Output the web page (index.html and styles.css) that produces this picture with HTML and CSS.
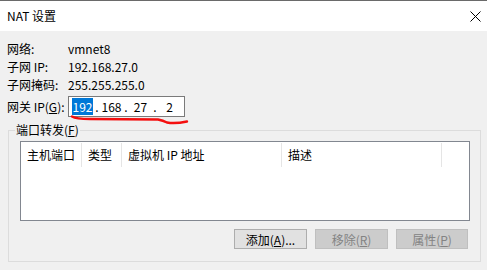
FILE: index.html
```html
<!DOCTYPE html>
<html lang="zh-CN">
<head>
    <meta charset="UTF-8">
    <title>NAT 设置</title>
    <link rel="stylesheet" href="styles.css">
</head>
<body>
    <div class="dialog">
        <div class="titlebar">
            <span class="title">NAT 设置</span>
            <svg class="close" width="11" height="11" viewBox="0 0 11 11">
                <path d="M0.5 0.5 L10.5 10.5 M10.5 0.5 L0.5 10.5" stroke="#000" stroke-width="1" fill="none"/>
            </svg>
        </div>

        <div class="content">
            <div class="row">
                <span class="label">网络:</span>
                <span class="value">vmnet8</span>
            </div>
            <div class="row">
                <span class="label">子网 IP:</span>
                <span class="value">192.168.27.0</span>
            </div>
            <div class="row">
                <span class="label">子网掩码:</span>
                <span class="value">255.255.255.0</span>
            </div>
            <div class="row gateway">
                <span class="label">网关 IP(<u>G</u>):</span>
                <div class="ip-box">
                    <span class="ip-field"><span class="selected">192</span></span>
                    <span class="ip-dot">.</span>
                    <span class="ip-field">168</span>
                    <span class="ip-dot">.</span>
                    <span class="ip-field">27</span>
                    <span class="ip-dot">.</span>
                    <span class="ip-field">2</span>
                </div>
            </div>

            <div class="group">
                <div class="group-title">端口转发(<u>F</u>)</div>
                <div class="list">
                    <div class="list-header">
                        <span class="col col-port">主机端口</span>
                        <span class="col col-type">类型</span>
                        <span class="col col-ip">虚拟机 IP 地址</span>
                        <span class="col col-desc">描述</span>
                    </div>
                </div>
                <div class="buttons">
                    <button class="btn">添加(<u>A</u>)...</button>
                    <button class="btn" disabled>移除(<u>R</u>)</button>
                    <button class="btn narrow" disabled>属性(<u>P</u>)</button>
                </div>
            </div>
        </div>

        <!-- hand drawn red mark under the gateway field -->
        <svg class="scribble" width="487" height="270" viewBox="0 0 487 270">
            <path d="M72 116.5 Q 76 119 90 119 L 158 119.5 Q 163 120.5 167 122.5 Q 175 124 187 121.5"
                  stroke="#f40f0f" stroke-width="2.4" fill="none" stroke-linecap="round"/>
        </svg>
    </div>
</body>
</html>
```

FILE: styles.css
```css
* {
    box-sizing: border-box;
    margin: 0;
    padding: 0;
}

body {
    font-family: "Noto Sans CJK SC", "Noto Sans", sans-serif;
    font-size: 12px;
    color: #000000;
    background-color: #f0f0f0;
}

.dialog {
    position: relative;
    width: 487px;
    height: 270px;
    overflow: hidden;
}

.titlebar {
    height: 31px;
    background-color: #ffffff;
    border-top: 1px solid #6a6a6a;
    display: flex;
    align-items: center;
    justify-content: space-between;
    padding: 0 6px 0 7px;
}

.title {
    font-size: 12px;
    line-height: 16px;
}

.content {
    padding-top: 8px;
}

.row {
    display: flex;
    align-items: center;
    height: 18px;
    padding-left: 7px;
}

.label {
    width: 61px;
    white-space: nowrap;
}

.row.gateway {
    height: 21px;
    margin-top: 3px;
}

.ip-box {
    display: flex;
    align-items: center;
    width: 117px;
    height: 21px;
    background-color: #ffffff;
    border: 1px solid #7a7a7a;
    padding-left: 1px;
}

.ip-field {
    width: 25px;
    text-align: center;
}

.ip-dot {
    width: 4px;
    text-align: center;
}

.selected {
    background-color: #0078d7;
    color: #ffffff;
    padding: 0 1px;
}

.group {
    margin: 13px 6px 0 8px;
    border: 1px solid #dcdcdc;
    padding: 0 10px 12px 11px;
}

.group-title {
    width: max-content;
    margin: -9px 0 0 -5px;
    padding: 0 1px;
    height: 16px;
    line-height: 16px;
    background-color: #f0f0f0;
}

.list {
    margin-top: 3px;
    height: 80px;
    background-color: #ffffff;
    border: 1px solid #828790;
}

.list-header {
    display: flex;
    margin-top: 1px;
    height: 24px;
}

.col {
    line-height: 24px;
    padding-left: 6px;
    border-right: 1px solid #e5e5e5;
    white-space: nowrap;
}

.col-port { width: 61px; }
.col-type { width: 40px; }
.col-ip { width: 160px; }
.col-desc { width: 160px; }

.buttons {
    display: flex;
    justify-content: flex-end;
    gap: 8px;
    margin-top: 8px;
    padding-right: 2px;
}

.btn {
    width: 73px;
    height: 20px;
    font-family: inherit;
    font-size: 12px;
    color: #000000;
    background-color: #e1e1e1;
    border: 1px solid #adadad;
}

.btn.narrow {
    width: 72px;
}

.btn:disabled {
    color: #838383;
    background-color: #cccccc;
    border-color: #bfbfbf;
}

.scribble {
    position: absolute;
    left: 0;
    top: 0;
    pointer-events: none;
}
```
